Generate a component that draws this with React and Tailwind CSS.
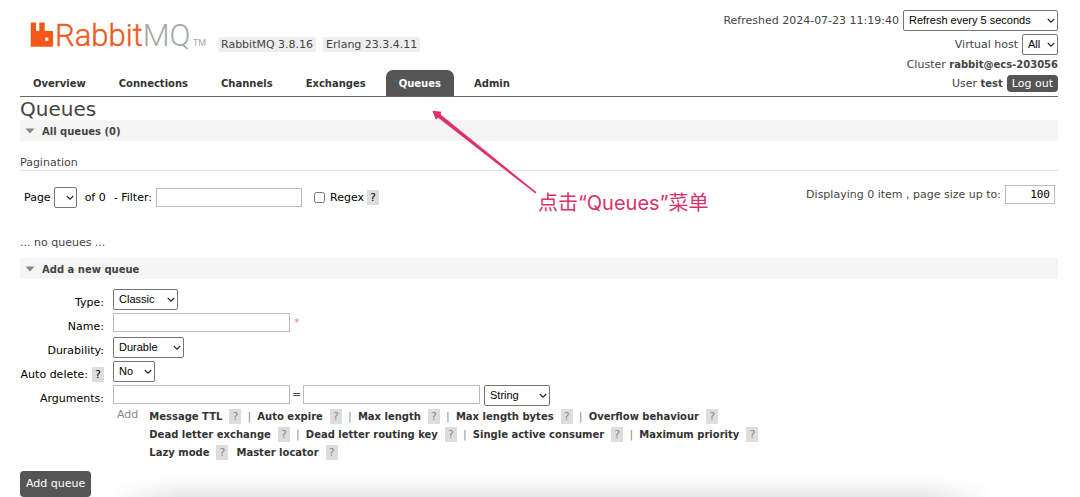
import { useState } from 'react';

const TABS = ['Overview', 'Connections', 'Channels', 'Exchanges', 'Queues', 'Admin'];

const ARGUMENT_ROWS = [
    ['Message TTL', 'Auto expire', 'Max length', 'Max length bytes', 'Overflow behaviour'],
    ['Dead letter exchange', 'Dead letter routing key', 'Single active consumer', 'Maximum priority'],
    ['Lazy mode', 'Master locator'],
];

function Logo() {
    return (
        <svg width="178" height="44" viewBox="0 0 178 44" role="img" aria-label="RabbitMQ">
            <path
                fill="#f4591b"
                fillRule="evenodd"
                d="M1.300 9.500h4.200q.6 0 .6.6v7.200q0 .6.6.6h2q.6 0 .6-.6v-7.200q0-.6.6-.6h4.200q.6 0 .6.6v7.200q0 .8.8.8h6.900q.7 0 .7.7v14.200q0 .7-.7.7H1.300q-.6 0-.6-.6V10.100q0-.6.6-.6zM15.200 25.200v2q0 .6.600.6h2q.6 0 .6-.6v-2q0-.6-.6-.6h-2q-.6 0-.6.6z"
            />
            <text x="25" y="33" fontSize="31" className="font-light" fontFamily="Roboto, sans-serif">
                <tspan fill="#ee5a20" stroke="#ee5a20" strokeWidth=".4">Rabbit</tspan>
                <tspan fill="#a3a8a8">MQ</tspan>
            </text>
            <text x="163" y="33" fontSize="9" fill="#a3a8a8" fontFamily="Roboto, sans-serif">TM</text>
        </svg>
    );
}

function Select({ className = '', options, ...props }) {
    return (
        <span className={`relative inline-flex ${className}`}>
            <select
                {...props}
                className="h-[21px] w-full appearance-none rounded-[2px] border border-[#767676] bg-white pl-[5px] pr-4 font-['Liberation_Sans',sans-serif] text-[11px] text-black"
            >
                {options.map((o) => <option key={o}>{o}</option>)}
            </select>
            <svg className="pointer-events-none absolute right-[3px] top-[8px]" width="8" height="6" viewBox="0 0 8 6" fill="none" stroke="#222">
                <path d="M.8 1L4 4.200 7.200 1" strokeWidth="1.100" />
            </svg>
        </span>
    );
}

function TextInput({ className = '', ...props }) {
    return <input type="text" {...props} className={`h-[19px] border border-[#bbb] bg-white px-1 ${className}`} />;
}

function Help({ className = 'text-black', topic }) {
    return (
        <button type="button" aria-label={`Help: ${topic}`} className={`h-[15px] w-[12px] bg-[#ddd] text-center leading-[15px] ${className}`}>
            ?
        </button>
    );
}

function SectionHeading({ children }) {
    return (
        <h2 className="flex h-[21px] items-center gap-[7px] bg-[#f5f5f5] pl-[5px] pt-px text-[10px] font-bold">
            <svg width="10" height="6" viewBox="0 0 10 6"><path d="M.5.5h9L5 5.500z" fill="#888" /></svg>
            {children}
        </h2>
    );
}

function FormRow({ id, label, help, children }) {
    return (
        <div className="flex h-[21px] items-start">
            <div className="mr-[9px] flex w-[84px] shrink-0 items-center justify-end gap-1 pt-[6px] text-black">
                <label htmlFor={id} className="whitespace-nowrap">{label}</label>
                {help && <Help topic="Auto delete" />}
            </div>
            {children}
        </div>
    );
}

function Header() {
    const [tab, setTab] = useState('Queues');

    return (
        <header className="flex justify-between border-b border-[#666]">
            <div className="flex flex-col justify-between pt-[13px]">
                <div className="flex items-start gap-[7px] pl-[10px]">
                    <Logo />
                    <span className="ml-[3px] mt-6 rounded-[3px] bg-[#eee] px-[3px] leading-[15px]">RabbitMQ 3.8.16</span>
                    <span className="mt-6 rounded-[3px] bg-[#eee] px-[3px] leading-[15px]">Erlang 23.3.4.11</span>
                </div>
                <nav className="flex gap-[7px]">
                    {TABS.map((t) => (
                        <a
                            key={t}
                            href="#"
                            onClick={() => setTab(t)}
                            className={`rounded-t-[7px] px-[13px] pt-px text-[10px] font-bold leading-[25px] ${t === tab ? 'bg-[#555] text-white' : 'text-[#333]'}`}
                        >
                            {t}
                        </a>
                    ))}
                </nav>
            </div>
            <div className="flex flex-col items-end pb-1 pt-[10px]">
                <div className="mb-[3px] flex items-center gap-1">
                    <span>Refreshed 2024-07-23 11:19:40</span>
                    <Select className="w-[155px]" aria-label="Refresh interval" options={['Refresh every 5 seconds']} />
                </div>
                <div className="flex items-center gap-1">
                    <label htmlFor="vhost">Virtual host</label>
                    <Select id="vhost" className="w-[36px]" options={['All']} />
                </div>
                <div className="mt-px leading-[18px]">Cluster <b className="text-[10px]">rabbit@ecs-203056</b></div>
                <div className="mt-px flex items-center gap-1 leading-[17px]">
                    <span>User <b className="text-[10px]">test</b></span>
                    <button type="button" className="rounded-[4px] bg-[#555] px-[5px] text-white">Log out</button>
                </div>
            </div>
        </header>
    );
}

function Annotation() {
    return (
        <div className="pointer-events-none absolute left-[432px] top-[110px] text-[#d6336c]">
            <svg width="108" height="86" viewBox="0 0 108 86" fill="none">
                <path d="M.5.8L9.500 1.800 8.600 4.600 104.500 82.200 103.500 83.600 6.200 7.800 3.800 9.800z" fill="#e0306c" />
            </svg>
            <p className="absolute left-[106px] top-[78px] whitespace-nowrap font-[Inter,'Noto_Sans_CJK_SC',sans-serif] text-[20px] leading-[30px]">
                点击“Queues”菜单
            </p>
        </div>
    );
}

export default function App() {
    return (
        <div className="relative bg-white pl-5 pr-[22px] font-['DejaVu_Sans',sans-serif] text-[11px] leading-[15px] text-[#444]">
            <Header />
            <main>
                <h1 className="pt-px text-[20px] leading-[22px]">Queues</h1>
                <SectionHeading>All queues (0)</SectionHeading>

                <h3 className="mt-[14px] border-b border-[#e4e4e4]">Pagination</h3>
                <div className="flex items-start justify-between pt-[14px]">
                    <div className="flex items-center pl-1 pt-[2px] text-black">
                        <label htmlFor="page" className="mr-[3px]">Page</label>
                        <Select id="page" className="w-[23px]" options={['']} />
                        <span className="ml-2">of 0</span>
                        <label htmlFor="filter" className="ml-2 mr-1">- Filter:</label>
                        <TextInput id="filter" className="w-[146px]" />
                        <input id="regex" type="checkbox" className="ml-3 h-[11px] w-[11px]" />
                        <label htmlFor="regex" className="ml-[5px] mr-[3px]">Regex</label>
                        <Help topic="Regex" />
                    </div>
                    <div className="flex items-center gap-1 pr-[3px]">
                        <label htmlFor="size">Displaying 0 item , page size up to:</label>
                        <TextInput id="size" defaultValue="100" className="w-[50px] text-right font-['DejaVu_Sans_Mono',monospace] text-black" />
                    </div>
                </div>
                <p className="mb-[8px] mt-[27px]">... no queues ...</p>

                <SectionHeading>Add a new queue</SectionHeading>
                <form className="pt-[10px]" onSubmit={(e) => e.preventDefault()}>
                    <div className="flex flex-col gap-[3px]">
                        <FormRow id="type" label="Type:">
                            <Select id="type" className="w-[65px]" options={['Classic', 'Quorum']} />
                        </FormRow>
                        <FormRow id="name" label="Name:">
                            <TextInput id="name" className="w-[177px]" />
                            <span className="ml-1 pt-[2px] text-[#e88]">*</span>
                        </FormRow>
                        <FormRow id="durability" label="Durability:">
                            <Select id="durability" className="w-[71px]" options={['Durable', 'Transient']} />
                        </FormRow>
                        <FormRow id="autodelete" label="Auto delete:" help>
                            <Select id="autodelete" className="w-[42px]" options={['No', 'Yes']} />
                        </FormRow>
                        <FormRow id="arguments" label="Arguments:">
                            <TextInput id="arguments" className="w-[177px]" />
                            <span className="w-[13px] pt-[2px] text-center">=</span>
                            <TextInput aria-label="Argument value" className="w-[177px]" />
                            <Select aria-label="Argument type" className="ml-1 w-[66px]" options={['String', 'Number', 'Boolean', 'List']} />
                        </FormRow>
                    </div>

                    <div className="flex gap-[11px] pl-[97px] pt-px text-[#888]">
                        <span>Add</span>
                        <div>
                            {ARGUMENT_ROWS.map((row, r) => (
                                <div key={row[0]} className="flex h-[18px] items-center">
                                    {row.map((name, i) => (
                                        <span key={name} className="flex items-center whitespace-nowrap">
                                            <button type="button" className="mr-[7px] text-[10px] font-bold text-[#333]">{name}</button>
                                            <Help topic={name} className="text-[#888]" />
                                            {i < row.length - 1 && (r < 2 ? <span className="mx-[5px] w-[6px] text-center">|</span> : <span className="w-2" />)}
                                        </span>
                                    ))}
                                </div>
                            ))}
                        </div>
                    </div>

                    <button type="submit" className="relative z-10 mt-[10px] rounded-[4px] bg-[#555] px-[6px] leading-[26px] text-white">
                        Add queue
                    </button>
                </form>
            </main>
            <div className="absolute bottom-0 left-[10%] right-[8%] h-5 bg-linear-to-b from-transparent to-[#e8e8e8] [mask-image:linear-gradient(to_right,transparent,black_8%,black_92%,transparent)]" />
            <Annotation />
        </div>
    );
}
